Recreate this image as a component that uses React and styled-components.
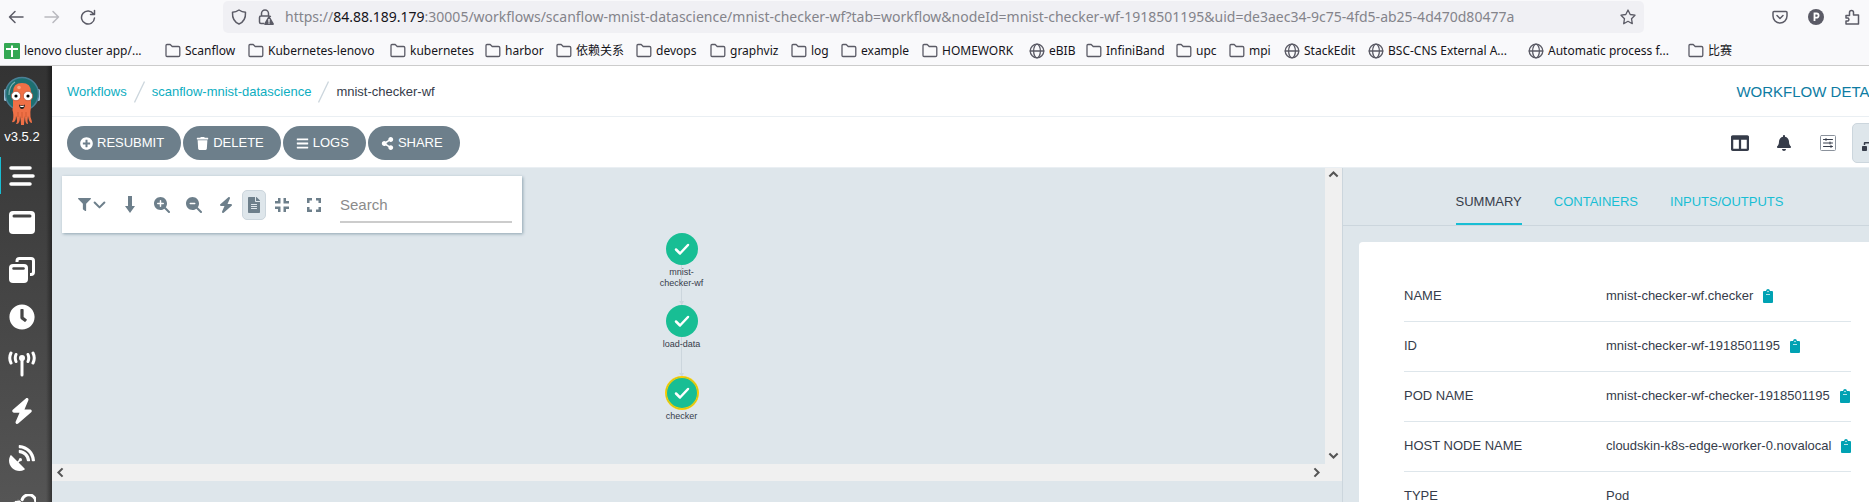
import React from 'react';
import styled, { createGlobalStyle } from 'styled-components';
import { FaPlusCircle, FaTrash, FaBars, FaShareAlt, FaFilter, FaFileAlt, FaColumns, FaBell, FaSitemap, FaClock, FaSatelliteDish, FaExclamationTriangle } from 'react-icons/fa';
import { FaBolt, FaMagnifyingGlassPlus, FaMagnifyingGlassMinus } from 'react-icons/fa6';

const Global = createGlobalStyle`
  * { box-sizing: border-box; }
  html, body, #root { height: 100%; margin: 0; }
  body { overflow: hidden; background: #dee6eb; font: 13px/20px "Liberation Sans", Arial, sans-serif; color: #363c4a; }
  button, input { font: inherit; color: inherit; }
  button { border: 0; padding: 0; background: none; cursor: pointer; }
  a { text-decoration: none; color: inherit; }
  svg { flex: none; display: block; }
`;

const Window = styled.div`display: flex; flex-direction: column; height: 100vh; overflow: hidden;`;

const Chrome = styled.header`
  flex: none; background: #f9f9fb; border-bottom: 1px solid #ccc;
  font-family: "Noto Sans", "Noto Sans CJK SC", sans-serif; color: #15141a;
`;
const NavRow = styled.div`display: flex; align-items: center; height: 34px; padding: 1px 9px 1px 8px;`;
const NavButton = styled.button`
  display: grid; place-items: center; width: 16px; height: 32px; margin-right: ${p => p.$gap || 20}px;
  color: #5b5b66; opacity: ${p => (p.$off ? 0.4 : 1)};
`;
const UrlBar = styled.div`
  flex: 1; display: flex; align-items: center; gap: 11px; height: 32px; padding: 0 8px 0 8px;
  margin: 0 128px 0 119px; border-radius: 5px; background: #f0f0f4; color: #5b5b66;
`;
const Url = styled.a`flex: 1; font-size: 14px; white-space: nowrap; color: #84848b; b { font-weight: 400; color: #15141a; }`;
const Extensions = styled.div`display: flex; gap: 20px; color: #5b5b66;`;
const Bookmarks = styled.nav`display: flex; height: 31px; padding: 3px 4px 0;`;
const Bookmark = styled.a`
  flex: none; display: flex; align-items: center; gap: 4px; width: ${p => p.$w}px;
  font-size: 12px; white-space: nowrap; svg { color: #5b5b66; }
`;

const Page = styled.div`flex: 1; display: flex; min-height: 0; margin-right: -44px; background: #dee6eb;`;
const Sidebar = styled.nav`
  flex: none; display: flex; flex-direction: column; align-items: flex-start; width: 52px; overflow: hidden;
  background: linear-gradient(90deg, transparent 46px, #0006 52px), linear-gradient(#333, #555); color: #fff;
`;
const Brand = styled.a`
  flex: none; display: flex; flex-direction: column; align-items: center; gap: 1px; width: 44px; height: 86px; padding-top: 10px;
`;
const SideLink = styled.a`
  flex: none; display: grid; place-items: center; width: 43px; height: 37px; margin: 5px 0;
  border-left: 1px solid ${p => (p.$active ? '#18bed4' : 'transparent')};
`;
const Main = styled.main`flex: 1; min-width: 0; display: flex; flex-direction: column;`;
const Bar = styled.div`
  flex: none; display: flex; align-items: center; justify-content: space-between; height: 51px;
  padding: 2px 21px 0 15px; background: #fff; border-bottom: 1px solid #eaeff3;
`;
const Crumbs = styled.nav`
  display: flex; align-items: center; gap: 7px; a { color: #0dadbf; }
`;
const Title = styled.h1`margin: 0; font-size: 15px; font-weight: 400; color: #0d7ca3;`;
const Actions = styled.div`display: flex; gap: 2px;`;
const Pill = styled.button`
  display: flex; align-items: center; gap: 4px; height: 34px; padding: 0 17px 0 13px; border-radius: 17px;
  background: #6d7f8b; color: #fff;
`;
const Views = styled.div`display: flex; align-items: center; gap: 4px;`;
const ViewButton = styled.button`
  display: grid; place-items: center; width: 40px; height: 40px; border-radius: 5px; color: #363c4a;
  border: 1px solid ${p => (p.$active ? '#ccd6dd' : 'transparent')};
  background: ${p => (p.$active ? '#dee6eb' : 'none')};
`;

const Body = styled.div`flex: 1; display: flex; min-height: 0;`;
const GraphPane = styled.section`
  flex: 1; min-width: 0; display: grid; grid-template: 296px 17px / minmax(0, 1fr) 17px; align-content: start;
`;
const Scroll = styled.div`
  display: flex; flex-direction: ${p => (p.$vertical ? 'column' : 'row')}; align-items: center;
  justify-content: space-between; padding: ${p => (p.$vertical ? '1px 0 3px' : '0 3px')}; background: #f0f0f0; color: #555;
`;
const Corner = styled.div`background: #f0f0f0;`;
const Canvas = styled.div`position: relative; padding: 8px 10px;`;
const Tools = styled.div`
  display: flex; align-items: center; width: 460px; height: 57px; padding: 0 10px 0 12px; background: #fff;
  box-shadow: 1px 1px 3px #8fa4b1; color: #6d7f8b;
`;
const Tool = styled.button`
  flex: none; display: flex; align-items: center; justify-content: center; gap: 2px; height: 30px;
  width: ${p => (p.$wide ? 36 : 24)}px; margin: ${p => (p.$active ? '0 4px 0 -4px' : '0 8px 0 0')};
  border-radius: 5px; border: 1px solid ${p => (p.$active ? '#ccd6dd' : 'transparent')};
  background: ${p => (p.$active ? '#dee6eb' : 'none')};
`;
const Search = styled.input`
  flex: 1; min-width: 0; height: 37px; margin-left: 6px; padding: 2px 0 0; border: 0; border-bottom: 2px solid #ccc;
  outline: 0; background: none; font-size: 15px; border-radius: 0;
  &::placeholder { color: #8b8b8b; opacity: 1; }
`;
const Node = styled.div`
  position: absolute; top: ${p => p.$y}px; left: calc(50% - 34px); width: 54px;
  display: flex; flex-direction: column; align-items: center; gap: 2px;
  font-size: 9px; line-height: 11px; text-align: center;
`;
const Dot = styled.div`
  display: grid; place-items: center; width: 32px; height: 32px; border-radius: 50%; background: #18be94; color: #fff;
  box-shadow: ${p => (p.$selected ? '0 0 0 1px #fc0, inset 0 0 0 1px #fc0' : 'none')};
`;
const Edge = styled.div`
  position: absolute; top: ${p => p.$y}px; left: calc(50% - 8px); width: 1px; height: 40px; background: #ccd6dd;
  &::after {
    content: ""; position: absolute; bottom: 0; left: -2px; border: solid transparent; border-width: 4px 2px 0 3px; border-top-color: #ccd6dd;
  }
`;

const Details = styled.aside`flex: none; width: 571px; border-left: 1px solid #ccd6dd; overflow: hidden;`;
const Tabs = styled.div`
  display: flex; justify-content: center; gap: 32px; height: 58px; padding-right: 17px; border-bottom: 1px solid #ccd6dd;
`;
const Tab = styled.button`
  height: 57px; padding-top: 13px; color: ${p => (p.$active ? '#363c4a' : '#18bed4')};
  border-bottom: 2px solid ${p => (p.$active ? '#18bed4' : 'transparent')};
`;
const Card = styled.div`margin: 16px 17px 0 16px; padding: 29px 45px; border-radius: 4px; background: #fff;`;
const Table = styled.table`
  width: 100%; border-collapse: collapse; table-layout: fixed;
  th, td { height: 50px; padding: 0; font-weight: 400; text-align: left; border-bottom: 1px solid #dee6eb; white-space: nowrap; }
  th { width: 202px; }
`;
const Value = styled.span`display: flex; align-items: center; gap: 10px;`;
const Copy = styled.button`color: #00a2b3;`;

const Line = ({ size = 16, w = 1.5, children, ...p }) => (
  <svg width={size} height={size} viewBox="0 0 16 16" fill="none" stroke="currentColor" strokeWidth={w} strokeLinecap="round" strokeLinejoin="round" {...p}>{children}</svg>
);
const Folder = () => <Line><path d="M1 12.5v-10Q1 1.5 2 1.5H5.2L7.2 3.5H13.5Q14.8 3.5 14.8 4.8V12.2Q14.8 13.5 13.5 13.5H2Q1 13.5 1 12.5Z" strokeWidth="1.3" /></Line>;
const Globe = () => <Line w={1.3}><circle cx="8" cy="8" r="6.8" /><ellipse cx="8" cy="8" rx="3.4" ry="6.8" /><path d="M1.2 8H14.8" /></Line>;
const Sheet = () => <svg width="16" height="16"><rect width="16" height="16" rx="1" fill="#34a853" /><path d="M2 6H14M8 2.5V14" stroke="#fff" strokeWidth="2" /></svg>;
const Arrow = ({ d }) => <Line size={11} w={3}><path d={d} strokeLinecap="butt" strokeLinejoin="miter" /></Line>;
const Slash = () => <svg width="11" height="22"><path d="M.5 21.5L10.5 .5" stroke="#ccd6dd" strokeWidth="1.300" /></svg>;
const Clipboard = () => (
  <svg width="10" height="14" viewBox="0 0 10 14"><path d="M1 2H3Q3.300 0 5 0T7 2H9Q10 2 10 3V13Q10 14 9 14H1Q0 14 0 13V3Q0 2 1 2Z" fill="currentColor" /><path d="M3 5.500H7" stroke="#b5e3e8" /><circle cx="5" cy="2.500" r=".7" fill="#fff" /></svg>
);
const Octopus = () => (
  <svg width="36" height="50" viewBox="0 0 36 50">
    <rect y="13" width="4" height="12" rx="1.500" fill="#9fc4dc" /><rect x="32" y="13" width="4" height="12" rx="1.500" fill="#9fc4dc" />
    <circle cx="18" cy="18" r="16.500" fill="#1d6f70" stroke="#4b7f95" strokeWidth="1.500" />
    <path d="M5 19Q5 10 11 6" fill="none" stroke="#7fb0b0" strokeWidth="1.200" />
    <path d="M9 20V16Q9 7 18 7T27 16V31Q26 36 26.500 41Q28 45 28 47Q25 47.500 24 40Q23 45 24 48Q21 49 21 40Q20 46 20 49H17Q17 45 16 40Q16 49 12 48Q14 45 12 40Q12 47 8 46Q10 42 9 36Q8 34 9 31Z" fill="#ef7046" />
    <circle cx="15" cy="11.500" r="1.800" fill="#f8a580" />
    <circle cx="12" cy="20" r="4.700" fill="#fff" stroke="#b8482a" strokeWidth=".7" /><circle cx="24" cy="20" r="4.700" fill="#fff" stroke="#b8482a" strokeWidth=".7" />
    <circle cx="12" cy="20" r="1.600" /><circle cx="24" cy="20" r="1.600" />
    <path d="M15 28.500Q18 30.500 21 28.500Q20.500 33 18 33T15 28.500Z" fill="#222" /><path d="M16 29.500Q18 30.500 20 29.500L19.500 31H16.500Z" fill="#fff" />
    <path d="M14 36V41M18 36V42M22 36V41" stroke="#c9502c" strokeWidth=".7" />
  </svg>
);
const Menu = () => <svg width="26" height="20" viewBox="0 0 26 20"><path d="M2 2H21M5 10H24M2 18H21" stroke="#fff" strokeWidth="3.500" strokeLinecap="round" /></svg>;
const Template = () => <svg width="26" height="23"><rect width="26" height="23" rx="4" fill="#fff" /><path d="M5 5H21" stroke="#444" strokeWidth="3" strokeLinecap="round" /></svg>;
const Cluster = () => (
  <svg width="26" height="26"><path d="M8 5V4Q8 1.500 10.500 1.500H22Q24.500 1.500 24.500 4V15Q24.500 17.500 22 17.500H21" fill="none" stroke="#fff" strokeWidth="3" /><rect y="7" width="19" height="19" rx="4" fill="#fff" /><path d="M4.500 11.500H14.500" stroke="#444" strokeWidth="2.500" strokeLinecap="round" /></svg>
);
const Tower = () => (
  <svg width="28" height="26" fill="none" stroke="#fff" strokeWidth="3" strokeLinecap="round"><path d="M14 7V24" /><circle cx="14" cy="7" r="2" fill="#fff" strokeWidth="2" /><path d="M8 3.500Q6.500 7 8 10.500M20 3.500Q21.500 7 20 10.500M3 2Q.5 7 3 12M25 2Q27.500 7 25 12" strokeWidth="3" /></svg>
);
const Clouds = () => (
  <svg width="28" height="22" viewBox="0 0 28 22"><path d="M14 6A7 7 0 1 1 24 14" fill="none" stroke="#fff" strokeWidth="3" strokeLinecap="round" /><path d="M5 22A5 5 0 0 1 4 12.500A6 6 0 0 1 14.500 8A6 6 0 0 1 20 14A4 4 0 0 1 19 22Z" fill="#fff" stroke="#4f4f4f" /></svg>
);
const Down = () => <svg width="10" height="17"><path d="M3 0H7V10H10L5 17L0 10H3Z" fill="currentColor" /></svg>;
const Chevron = () => <Line size={13} w={2.5}><path d="M2 5.500L8 11.500L14 5.500" /></Line>;
const Compact = ({ d }) => <svg width="14" height="14" fill="none" stroke="currentColor" strokeWidth="2.500"><path d={d} /></svg>;
const Sliders = () => <Line w={1}><rect x=".5" y=".5" width="15" height="15" rx="1" stroke="#8b929c" /><path d="M3.500 4.500H12.500M3.500 8H12.500M3.500 11.500H12.500M6 3.500V5.500M10 7V9M11 10.500V12.500" /></Line>;

const bookmarks = [
  ['sheet', 'lenovo cluster app/...', 161], ['folder', 'Scanflow', 83], ['folder', 'Kubernetes-lenovo', 142], ['folder', 'kubernetes', 95],
  ['folder', 'harbor', 71], ['folder', '依赖关系', 80], ['folder', 'devops', 74], ['folder', 'graphviz', 81], ['folder', 'log', 50],
  ['folder', 'example', 81], ['folder', 'HOMEWORK', 107], ['globe', 'eBIB', 57], ['folder', 'InfiniBand', 90], ['folder', 'upc', 53],
  ['folder', 'mpi', 55], ['globe', 'StackEdit', 84], ['globe', 'BSC-CNS External A...', 160], ['globe', 'Automatic process f...', 160], ['folder', '比赛', 60],
];
const marks = { sheet: Sheet, folder: Folder, globe: Globe };

const sideItems = [
  ['Workflows', <Menu />], ['Workflow Templates', <Template />], ['Cluster Workflow Templates', <Cluster />], ['Cron Workflows', <FaClock size={26} />],
  ['Event Flow', <Tower />], ['Event Sources', <FaBolt size={26} />], ['Sensors', <FaSatelliteDish size={26} />], ['Event Bindings', <Clouds />],
];
const tools = [
  ['Down', <Down />], ['Zoom in', <FaMagnifyingGlassPlus size={16} />], ['Zoom out', <FaMagnifyingGlassMinus size={16} />],
  ['Fast', <FaBolt size={16} />], ['Show artifacts', <FaFileAlt size={16} />, true],
  ['Collapse', <Compact d="M0 4.250H4.250V0M9.750 0V4.250H14M0 9.750H4.250V14M9.750 14V9.750H14" />],
  ['Expand', <Compact d="M1.250 5V1.250H5M9 1.250H12.750V5M1.250 9V12.750H5M9 12.750H12.750V9" />],
];
const nodes = [['mnist-checker-wf', 65], ['load-data', 137], ['checker', 209, true]];
const rows = [
  ['NAME', 'mnist-checker-wf.checker', true], ['ID', 'mnist-checker-wf-1918501195', true], ['POD NAME', 'mnist-checker-wf-checker-1918501195', true],
  ['HOST NODE NAME', 'cloudskin-k8s-edge-worker-0.novalocal', true], ['TYPE', 'Pod'],
];

export default function App() {
  return (
    <Window>
      <Global />
      <Chrome>
        <NavRow>
          <NavButton aria-label="Back"><Line><path d="M15 8H1.500M7 2.500L1.500 8L7 13.500" /></Line></NavButton>
          <NavButton aria-label="Forward" $off><Line><path d="M1 8H14.500M9 2.500L14.500 8L9 13.500" /></Line></NavButton>
          <NavButton aria-label="Reload" $gap={8}><Line><path d="M13.500 5A6.500 6.500 0 1 0 14.500 9M14.500 1.500V5.500H10.500" /></Line></NavButton>
          <UrlBar>
            <Line><path d="M8 1Q11 3 14.500 3.200Q15 12 8 15Q1 12 1.500 3.200Q5 3 8 1Z" /></Line>
            <svg width="16" height="16" viewBox="0 0 16 16"><path d="M3.500 7V4.500A3.500 3.500 0 0 1 10.500 4.500V7M6 14.500H3Q1.500 14.500 1.500 13V8.500Q1.500 7 3 7H11Q12.500 7 12.500 8" fill="none" stroke="currentColor" strokeWidth="1.500" /><g transform="translate(6 6.500)"><FaExclamationTriangle size={10} /></g></svg>
            <Url href="#">https://<b>84.88.189.179</b>:30005/workflows/scanflow-mnist-datascience/mnist-checker-wf?tab=workflow&amp;nodeId=mnist-checker-wf-1918501195&amp;uid=de3aec34-9c75-4fd5-ab25-4d470d80477a</Url>
            <Line w={1.3}><path d="M8 1L10.200 5.500L15 6.200L11.500 9.700L12.300 14.700L8 12.300L3.700 14.700L4.500 9.700L1 6.200L5.800 5.500Z" /></Line>
          </UrlBar>
          <Extensions>
            <Line><path d="M2 2.500H14Q15 2.500 15 3.500V7A7 7 0 0 1 1 7V3.500Q1 2.500 2 2.500ZM5 6.500L8 9.500L11 6.500" /></Line>
            <svg width="16" height="16"><circle cx="8" cy="8" r="8" fill="currentColor" /><path d="M6.500 12V4.500H8.500A2 2 0 0 1 8.500 8.700H6.500" fill="none" stroke="#fff" strokeWidth="1.800" /></svg>
            <Line><path d="M2 6.500H5.500V3.500A2 2 0 0 1 9.500 3.500V6H14.500V15H2V12H4A1.700 1.700 0 0 0 4 9H2Z" /></Line>
          </Extensions>
        </NavRow>
        <Bookmarks>
          {bookmarks.map(([kind, text, w]) => { const Icon = marks[kind]; return <Bookmark href="#" key={text} $w={w}><Icon />{text}</Bookmark>; })}
        </Bookmarks>
      </Chrome>
      <Page>
        <Sidebar>
          <Brand href="#"><Octopus />v3.5.2</Brand>
          {sideItems.map(([label, icon], i) => <SideLink href="#" key={label} aria-label={label} $active={i === 0}>{icon}</SideLink>)}
        </Sidebar>
        <Main>
          <Bar>
            <Crumbs><a href="#">Workflows</a><Slash /><a href="#">scanflow-mnist-datascience</a><Slash /><span>mnist-checker-wf</span></Crumbs>
            <Title>WORKFLOW DETAILS</Title>
          </Bar>
          <Bar>
            <Actions>
              <Pill><FaPlusCircle size={13} />RESUBMIT</Pill>
              <Pill><FaTrash size={13} />DELETE</Pill>
              <Pill><FaBars size={13} />LOGS</Pill>
              <Pill><FaShareAlt size={13} />SHARE</Pill>
            </Actions>
            <Views>
              <ViewButton aria-label="Panels"><FaColumns size={18} /></ViewButton>
              <ViewButton aria-label="Notifications"><FaBell size={16} /></ViewButton>
              <ViewButton aria-label="Parameters"><Sliders /></ViewButton>
              <ViewButton aria-label="Graph" $active><FaSitemap size={20} /></ViewButton>
            </Views>
          </Bar>
          <Body>
            <GraphPane>
              <Canvas>
                <Tools>
                  <Tool aria-label="Filter" $wide><FaFilter size={13} /><Chevron /></Tool>
                  {tools.map(([label, icon, active]) => <Tool key={label} aria-label={label} $active={active}>{icon}</Tool>)}
                  <Search aria-label="Search" placeholder="Search" />
                </Tools>
                <Edge $y={97} /><Edge $y={169} />
                {nodes.map(([name, y, selected]) => (
                  <Node key={name} $y={y}><Dot $selected={selected}><Line size={16} w={2.5}><path d="M2 8.500L6 12.500L14 4" /></Line></Dot>{name}</Node>
                ))}
              </Canvas>
              <Scroll $vertical><Arrow d="M2 11L8 5L14 11" /><Arrow d="M2 5L8 11L14 5" /></Scroll>
              <Scroll><Arrow d="M11 2L5 8L11 14" /><Arrow d="M5 2L11 8L5 14" /></Scroll>
              <Corner />
            </GraphPane>
            <Details>
              <Tabs><Tab $active>SUMMARY</Tab><Tab>CONTAINERS</Tab><Tab>INPUTS/OUTPUTS</Tab></Tabs>
              <Card>
                <Table><tbody>
                  {rows.map(([label, value, copy]) => (
                    <tr key={label}><th scope="row">{label}</th><td><Value>{value}{copy && <Copy aria-label={`Copy ${label}`}><Clipboard /></Copy>}</Value></td></tr>
                  ))}
                </tbody></Table>
              </Card>
            </Details>
          </Body>
        </Main>
      </Page>
    </Window>
  );
}
